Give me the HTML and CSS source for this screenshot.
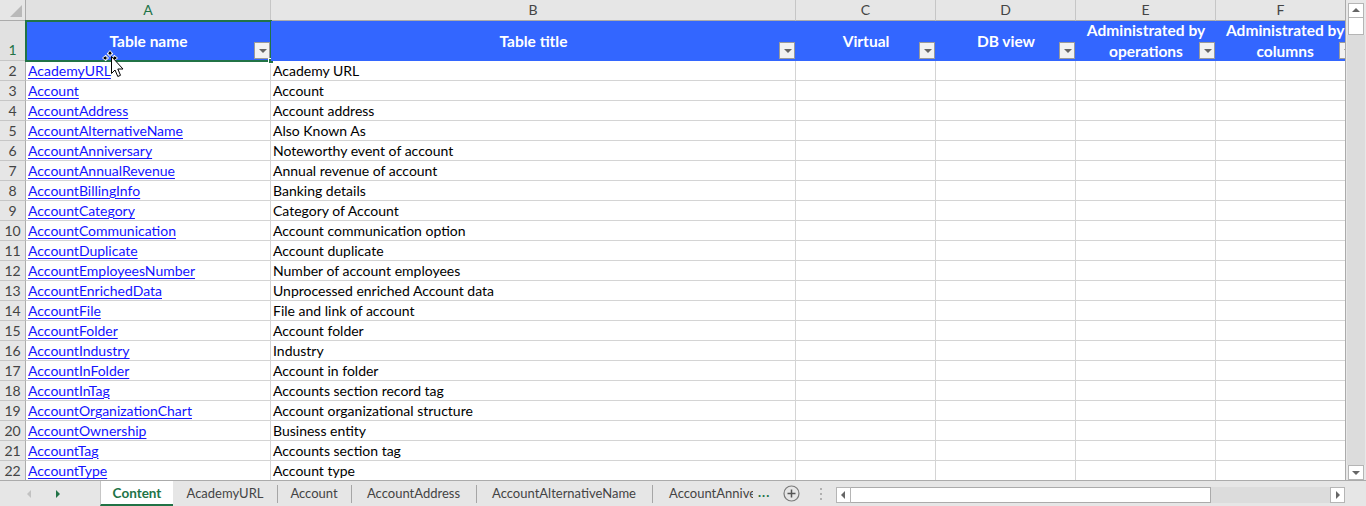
FILE: index.html
```html
<!DOCTYPE html>
<html>
<head>
<meta charset="utf-8">
<link rel="stylesheet" href="styles.css">
</head>
<body>
<div class="app">
  <div class="main">
    <div class="sheet">
      <div class="corner"><span class="corner-tri"></span></div>
      <div class="colhead sel">A</div>
      <div class="colhead">B</div>
      <div class="colhead">C</div>
      <div class="colhead">D</div>
      <div class="colhead">E</div>
      <div class="colhead last">F</div>

      <div class="rownum r1 sel">1</div>
      <div class="hcell"><span>Table name</span><i class="fbtn"></i><b class="selbox"><em class="handle"></em></b></div>
      <div class="hcell"><span>Table title</span><i class="fbtn"></i></div>
      <div class="hcell"><span>Virtual</span><i class="fbtn"></i></div>
      <div class="hcell"><span>DB view</span><i class="fbtn"></i></div>
      <div class="hcell"><span>Administrated by<br>operations</span><i class="fbtn"></i></div>
      <div class="hcell last clip"><span class="wide">Administrated by<br>columns</span><i class="fbtn"></i></div>

      <div class="rownum">2</div><div class="cell"><a>AcademyURL</a></div><div class="cell">Academy URL</div><div class="cell"></div><div class="cell"></div><div class="cell"></div><div class="cell last"></div>
      <div class="rownum">3</div><div class="cell"><a>Account</a></div><div class="cell">Account</div><div class="cell"></div><div class="cell"></div><div class="cell"></div><div class="cell last"></div>
      <div class="rownum">4</div><div class="cell"><a>AccountAddress</a></div><div class="cell">Account address</div><div class="cell"></div><div class="cell"></div><div class="cell"></div><div class="cell last"></div>
      <div class="rownum">5</div><div class="cell"><a>AccountAlternativeName</a></div><div class="cell">Also Known As</div><div class="cell"></div><div class="cell"></div><div class="cell"></div><div class="cell last"></div>
      <div class="rownum">6</div><div class="cell"><a>AccountAnniversary</a></div><div class="cell">Noteworthy event of account</div><div class="cell"></div><div class="cell"></div><div class="cell"></div><div class="cell last"></div>
      <div class="rownum">7</div><div class="cell"><a>AccountAnnualRevenue</a></div><div class="cell">Annual revenue of account</div><div class="cell"></div><div class="cell"></div><div class="cell"></div><div class="cell last"></div>
      <div class="rownum">8</div><div class="cell"><a>AccountBillingInfo</a></div><div class="cell">Banking details</div><div class="cell"></div><div class="cell"></div><div class="cell"></div><div class="cell last"></div>
      <div class="rownum">9</div><div class="cell"><a>AccountCategory</a></div><div class="cell">Category of Account</div><div class="cell"></div><div class="cell"></div><div class="cell"></div><div class="cell last"></div>
      <div class="rownum">10</div><div class="cell"><a>AccountCommunication</a></div><div class="cell">Account communication option</div><div class="cell"></div><div class="cell"></div><div class="cell"></div><div class="cell last"></div>
      <div class="rownum">11</div><div class="cell"><a>AccountDuplicate</a></div><div class="cell">Account duplicate</div><div class="cell"></div><div class="cell"></div><div class="cell"></div><div class="cell last"></div>
      <div class="rownum">12</div><div class="cell"><a>AccountEmployeesNumber</a></div><div class="cell">Number of account employees</div><div class="cell"></div><div class="cell"></div><div class="cell"></div><div class="cell last"></div>
      <div class="rownum">13</div><div class="cell"><a>AccountEnrichedData</a></div><div class="cell">Unprocessed enriched Account data</div><div class="cell"></div><div class="cell"></div><div class="cell"></div><div class="cell last"></div>
      <div class="rownum">14</div><div class="cell"><a>AccountFile</a></div><div class="cell">File and link of account</div><div class="cell"></div><div class="cell"></div><div class="cell"></div><div class="cell last"></div>
      <div class="rownum">15</div><div class="cell"><a>AccountFolder</a></div><div class="cell">Account folder</div><div class="cell"></div><div class="cell"></div><div class="cell"></div><div class="cell last"></div>
      <div class="rownum">16</div><div class="cell"><a>AccountIndustry</a></div><div class="cell">Industry</div><div class="cell"></div><div class="cell"></div><div class="cell"></div><div class="cell last"></div>
      <div class="rownum">17</div><div class="cell"><a>AccountInFolder</a></div><div class="cell">Account in folder</div><div class="cell"></div><div class="cell"></div><div class="cell"></div><div class="cell last"></div>
      <div class="rownum">18</div><div class="cell"><a>AccountInTag</a></div><div class="cell">Accounts section record tag</div><div class="cell"></div><div class="cell"></div><div class="cell"></div><div class="cell last"></div>
      <div class="rownum">19</div><div class="cell"><a>AccountOrganizationChart</a></div><div class="cell">Account organizational structure</div><div class="cell"></div><div class="cell"></div><div class="cell"></div><div class="cell last"></div>
      <div class="rownum">20</div><div class="cell"><a>AccountOwnership</a></div><div class="cell">Business entity</div><div class="cell"></div><div class="cell"></div><div class="cell"></div><div class="cell last"></div>
      <div class="rownum">21</div><div class="cell"><a>AccountTag</a></div><div class="cell">Accounts section tag</div><div class="cell"></div><div class="cell"></div><div class="cell"></div><div class="cell last"></div>
      <div class="rownum">22</div><div class="cell"><a>AccountType</a></div><div class="cell">Account type</div><div class="cell"></div><div class="cell"></div><div class="cell"></div><div class="cell last"></div>
    </div>
    <div class="vscroll">
      <div class="vbtn up"><i class="tri-up"></i></div>
      <div class="vthumb"></div>
      <div class="vtrack"></div>
      <div class="vbtn down"><i class="tri-down"></i></div>
    </div>
    <svg class="cursor" width="26" height="30" viewBox="0 0 26 30">
      <g fill="#000" stroke="#fff" stroke-width="1">
        <path d="M8 0.5 L11 4 L9 4 L9 6 L7 6 L7 4 L5 4 Z"/>
        <path d="M0.5 8 L4 5 L4 7 L6 7 L6 9 L4 9 L4 11 Z"/>
        <path d="M15.5 8 L12 5 L12 7 L10 7 L10 9 L12 9 L12 11 Z"/>
      </g>
      <path d="M9.5 6.5 L9.5 23.5 L13 20 L15.8 26.5 L18.5 25.3 L15.8 19 L21 19 Z" fill="#fff" stroke="#000" stroke-width="1"/>
    </svg>
  </div>
  <div class="tabbar">
    <div class="tabnav">
      <span class="nav-l"></span>
      <span class="nav-r"></span>
    </div>
    <div class="tabs">
      <div class="tab active">Content</div>
      <div class="tab w1">AcademyURL</div>
      <div class="tab w2">Account</div>
      <div class="tab w3">AccountAddress</div>
      <div class="tab w4">AccountAlternativeName</div>
      <div class="tab cut">AccountAnnive</div>
      <div class="more">...</div>
      <div class="add"><svg width="17" height="17" viewBox="0 0 17 17"><circle cx="8.5" cy="8.5" r="7.5" fill="none" stroke="#7a7a7a" stroke-width="1.2"/><path d="M8.5 4.5V12.5M4.5 8.5H12.5" stroke="#555" stroke-width="1.5"/></svg></div>
      <div class="grip"><i></i><i></i><i></i></div>
    </div>
    <div class="hscroll">
      <div class="hbtn"><i class="tri-left"></i></div>
      <div class="hthumb"></div>
      <div class="htrack"></div>
      <div class="hbtn"><i class="tri-right"></i></div>
    </div>
  </div>
</div>
</body>
</html>
```
FILE: styles.css
```css
* { box-sizing: border-box; }
html, body { margin: 0; padding: 0; }
body {
  width: 1366px;
  height: 506px;
  overflow: hidden;
  background: #fff;
  font-family: Lato, "Open Sans", sans-serif;
}
.app { display: flex; flex-direction: column; width: 1366px; height: 506px; }
.main { position: relative; display: flex; height: 481px; border-bottom: 1px solid #ababab; }
.sheet {
  display: grid;
  grid-template-columns: 26px 245px 525px 140px 140px 140px 129px;
  grid-template-rows: 21px 40px repeat(21, 20px);
  width: 1345px;
  height: 480px;
  overflow: hidden;
  font-size: 14px;
}
.corner {
  position: relative;
  background: #e6e6e6;
  border-right: 1px solid #ababab;
  border-bottom: 1px solid #ababab;
}
.corner-tri {
  position: absolute;
  right: 3px; bottom: 3px;
  width: 0; height: 0;
  border-left: 12px solid transparent;
  border-bottom: 12px solid #b9b9b9;
}
.colhead {
  background: #e6e6e6;
  border-right: 1px solid #c6c6c6;
  border-bottom: 1px solid #ababab;
  color: #444;
  font-size: 14px;
  text-align: center;
  line-height: 20px;
}
.colhead.sel { background: #e1e1e1; color: #217346; }
.rownum {
  background: #e6e6e6;
  border-right: 1px solid #ababab;
  border-bottom: 1px solid #c6c6c6;
  color: #444;
  font-size: 14px;
  text-align: center;
  line-height: 20px;
}
.rownum.r1 { display: flex; align-items: flex-end; justify-content: center; }
.rownum.sel { color: #217346; background: #e1e1e1; }
.hcell {
  position: relative;
  background: #3366ff;
  color: #fff;
  font-weight: 700;
  font-size: 15.5px;
  display: flex;
  align-items: center;
  justify-content: center;
  text-align: center;
  line-height: 21px;
}
.hcell.clip { overflow: hidden; justify-content: flex-start; }
.hcell .wide { white-space: nowrap; margin-left: 10px; }
.fbtn {
  position: absolute;
  right: 1px;
  bottom: 2px;
  width: 16px;
  height: 17px;
  background: #f2f2f2;
  border: 1px solid #9a9a9a;
}
.fbtn::after {
  content: "";
  position: absolute;
  left: 4px; top: 6px;
  border-left: 4px solid transparent;
  border-right: 4px solid transparent;
  border-top: 4px solid #666;
}
.hcell.last .fbtn { right: -10px; }
.selbox {
  position: absolute;
  left: -1px; top: -1px; right: -1px; bottom: -1px;
  border: 2px solid #217346;
  pointer-events: none;
}
.handle {
  position: absolute;
  right: -4px; bottom: -4px;
  width: 6px; height: 6px;
  background: #217346;
  border: 1px solid #fff;
}
.cell {
  border-right: 1px solid #d4d4d4;
  border-bottom: 1px solid #d4d4d4;
  padding-left: 2px;
  line-height: 20px;
  color: #000;
  white-space: nowrap;
  overflow: hidden;
}
.cell a { color: #1414ff; text-decoration: underline; text-underline-offset: 2px; }
.last { border-right: none; }
.vscroll {
  width: 21px;
  height: 480px;
  background: #e8e8e8;
  border-left: 1px solid #ababab;
  display: flex;
  flex-direction: column;
  padding: 3px 2px 0 2px;
}
.vbtn {
  height: 15px;
  background: #fff;
  border: 1px solid #b5b5b5;
  position: relative;
}
.vthumb { height: 17px; background: #fff; border: 1px solid #b5b5b5; border-top: none; }
.vtrack { flex: 1; background: #dcdcdc; margin: 0 -1px; }
.tri-up, .tri-down, .tri-left, .tri-right { position: absolute; width: 0; height: 0; }
.tri-up { left: 3px; top: 4px; border-left: 4px solid transparent; border-right: 4px solid transparent; border-bottom: 4px solid #666; }
.tri-down { left: 3px; top: 5px; border-left: 4px solid transparent; border-right: 4px solid transparent; border-top: 4px solid #666; }
.tri-left { left: 4px; top: 3px; border-top: 4px solid transparent; border-bottom: 4px solid transparent; border-right: 4px solid #666; }
.tri-right { left: 5px; top: 3px; border-top: 4px solid transparent; border-bottom: 4px solid transparent; border-left: 4px solid #666; }
.cursor { position: absolute; left: 102px; top: 50px; }

.tabbar {
  display: flex;
  height: 25px;
  background: #e6e6e6;
  font-size: 13px;
  color: #444;
}
.tabnav { width: 100px; flex: none; position: relative; }
.nav-l { position: absolute; left: 27px; top: 9px; border-top: 4px solid transparent; border-bottom: 4px solid transparent; border-right: 4px solid #c2c2c2; }
.nav-r { position: absolute; left: 56px; top: 9px; border-top: 4px solid transparent; border-bottom: 4px solid transparent; border-left: 4px solid #217346; }
.tabs { display: flex; align-items: stretch; width: 736px; flex: none; }
.tab {
  line-height: 24px;
  position: relative;
  white-space: nowrap;
  text-align: center;
  flex: none;
}
.tab.w1 { width: 104px; }
.tab.w2 { width: 74px; }
.tab.w3 { width: 125px; }
.tab.w4 { width: 176px; }
.tab + .tab::before {
  content: "";
  position: absolute;
  left: 0; top: 4px; bottom: 3px;
  width: 1px;
  background: #a6a6a6;
}
.tab.active {
  background: #fff;
  color: #217346;
  font-weight: 700;
  font-size: 13.5px;
  width: 73px;
  border-left: 1px solid #c6c6c6;
  border-bottom: 2px solid #217346;
}
.tab.active + .tab::before { display: none; }
.tab.cut { width: 101px; overflow: hidden; text-align: left; padding-left: 17px; }
.more { color: #217346; font-weight: 700; line-height: 22px; margin-left: 5px; letter-spacing: 1px; }
.add { display: flex; align-items: center; margin-left: 13px; }
.grip { display: flex; flex-direction: column; justify-content: center; gap: 3px; margin-left: 20px; }
.grip i { display: block; width: 2px; height: 2px; background: #b0b0b0; }
.hscroll {
  display: flex;
  width: 509px;
  flex: none;
  margin-top: 6px;
  height: 16px;
  background: #dcdcdc;
}
.hbtn { width: 15px; height: 16px; background: #fff; border: 1px solid #b5b5b5; position: relative; }
.hthumb { width: 360px; background: #fff; border: 1px solid #ababab; border-left: none; }
.htrack { flex: 1; }
```
